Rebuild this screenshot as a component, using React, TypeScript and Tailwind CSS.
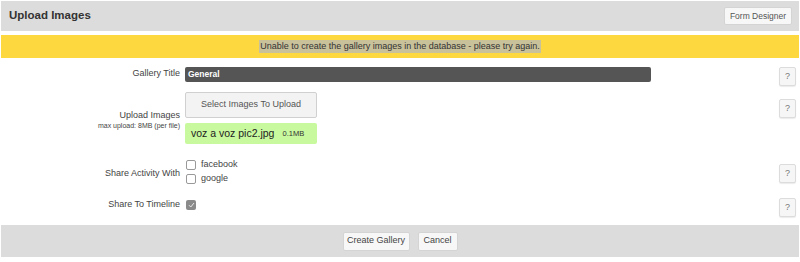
import React from 'react'

const font = { fontFamily: '"Liberation Sans", Arial, sans-serif' }

function HelpButton() {
  return (
    <button className="w-[17px] h-[19px] bg-[#f6f6f6] border border-[#dcdcdc] rounded-[2px] text-[9px] text-[#777] leading-none shadow-[0_1px_1px_rgba(0,0,0,0.08)]">
      ?
    </button>
  )
}

function Checkbox({ checked }: { checked?: boolean }) {
  if (checked) {
    return (
      <span className="w-[10px] h-[10px] rounded-[2px] bg-[#8a8a8a] flex items-center justify-center">
        <svg width="7" height="6" viewBox="0 0 7 6" fill="none">
          <path d="M1 3.2 L2.8 5 L6 1" stroke="#e8e8e8" strokeWidth="1" />
        </svg>
      </span>
    )
  }
  return <span className="w-[10px] h-[10px] rounded-[2px] border border-[#999] bg-white block" />
}

export default function App() {
  return (
    <div className="w-[800px] h-[262px] bg-white flex flex-col text-[#444]" style={font}>
      <div className="mt-[1px] mx-[1px] h-[30px] bg-[#dcdcdc] flex items-center justify-between pl-[8px] pr-[7px]">
        <div className="text-[11.5px] font-bold text-[#333]">Upload Images</div>
        <button className="h-[18px] w-[68px] bg-[#f7f7f7] border border-[#d4d4d4] rounded-[2px] text-[8.5px] text-[#555]">
          Form Designer
        </button>
      </div>

      <div className="mt-[4px] mx-[1px] h-[23px] bg-[#fed83f] flex items-center justify-center">
        <span className="text-[9px] text-[#333] bg-[#c9c19a] px-[1px] leading-[13px]">
          Unable to create the gallery images in the database - please try again.
        </span>
      </div>

      {/* Gallery title */}
      <div className="mt-[7px] h-[18px] flex items-center">
        <div className="w-[180px] text-right text-[9px]">Gallery Title</div>
        <div className="ml-[5px] w-[466px] h-[15px] bg-[#555] rounded-[2px] flex items-center px-[3px] text-[8.5px] text-white font-bold">
          General
        </div>
        <div className="ml-auto mr-[4px]"><HelpButton /></div>
      </div>

      {/* Upload images */}
      <div className="mt-[9px] h-[52px] flex items-start">
        <div className="w-[180px] h-full flex flex-col items-end justify-end pb-[14px]">
          <div className="text-[9px] leading-[12px]">Upload Images</div>
          <div className="text-[7px] leading-[9px]">max upload: 8MB (per file)</div>
        </div>
        <div className="ml-[5px] flex flex-col gap-[5px]">
          <button className="w-[132px] h-[26px] bg-[#f3f3f3] border border-[#d0d0d0] rounded-[2px] text-[9px] text-[#555]">
            Select Images To Upload
          </button>
          <div className="w-[132px] h-[21px] bg-[#c9f99e] rounded-[2px] flex items-center px-[6px] gap-[8px] whitespace-nowrap">
            <span className="text-[10.5px] text-[#222]">voz a voz pic2.jpg</span>
            <span className="text-[7.5px] text-[#333]">0.1MB</span>
          </div>
        </div>
        <div className="ml-auto mr-[4px] mt-[2px]"><HelpButton /></div>
      </div>

      {/* Share activity */}
      <div className="mt-[15px] h-[26px] flex items-start">
        <div className="w-[180px] h-full flex items-center justify-end text-[9px] pt-[3px]">Share Activity With</div>
        <div className="ml-[6px] flex flex-col gap-[3px]">
          <div className="flex items-center gap-[5px] h-[11px]">
            <Checkbox />
            <span className="text-[9px]">facebook</span>
          </div>
          <div className="flex items-center gap-[5px] h-[11px]">
            <Checkbox />
            <span className="text-[9px]">google</span>
          </div>
        </div>
        <div className="ml-auto mr-[4px]"><HelpButton /></div>
      </div>

      {/* Share to timeline */}
      <div className="mt-[11px] h-[18px] flex items-center">
        <div className="w-[180px] text-right text-[9px]">Share To Timeline</div>
        <div className="ml-[6px]"><Checkbox checked /></div>
        <div className="ml-auto mr-[4px]"><HelpButton /></div>
      </div>

      <div className="mt-[11px] mx-[1px] h-[32px] bg-[#dcdcdc] flex items-center justify-center gap-[8px]">
        <button className="h-[19px] w-[67px] bg-[#f7f7f7] border border-[#d4d4d4] rounded-[2px] text-[9px] text-[#444]">
          Create Gallery
        </button>
        <button className="h-[19px] w-[40px] bg-[#f7f7f7] border border-[#d4d4d4] rounded-[2px] text-[9px] text-[#444]">
          Cancel
        </button>
      </div>
    </div>
  )
}
